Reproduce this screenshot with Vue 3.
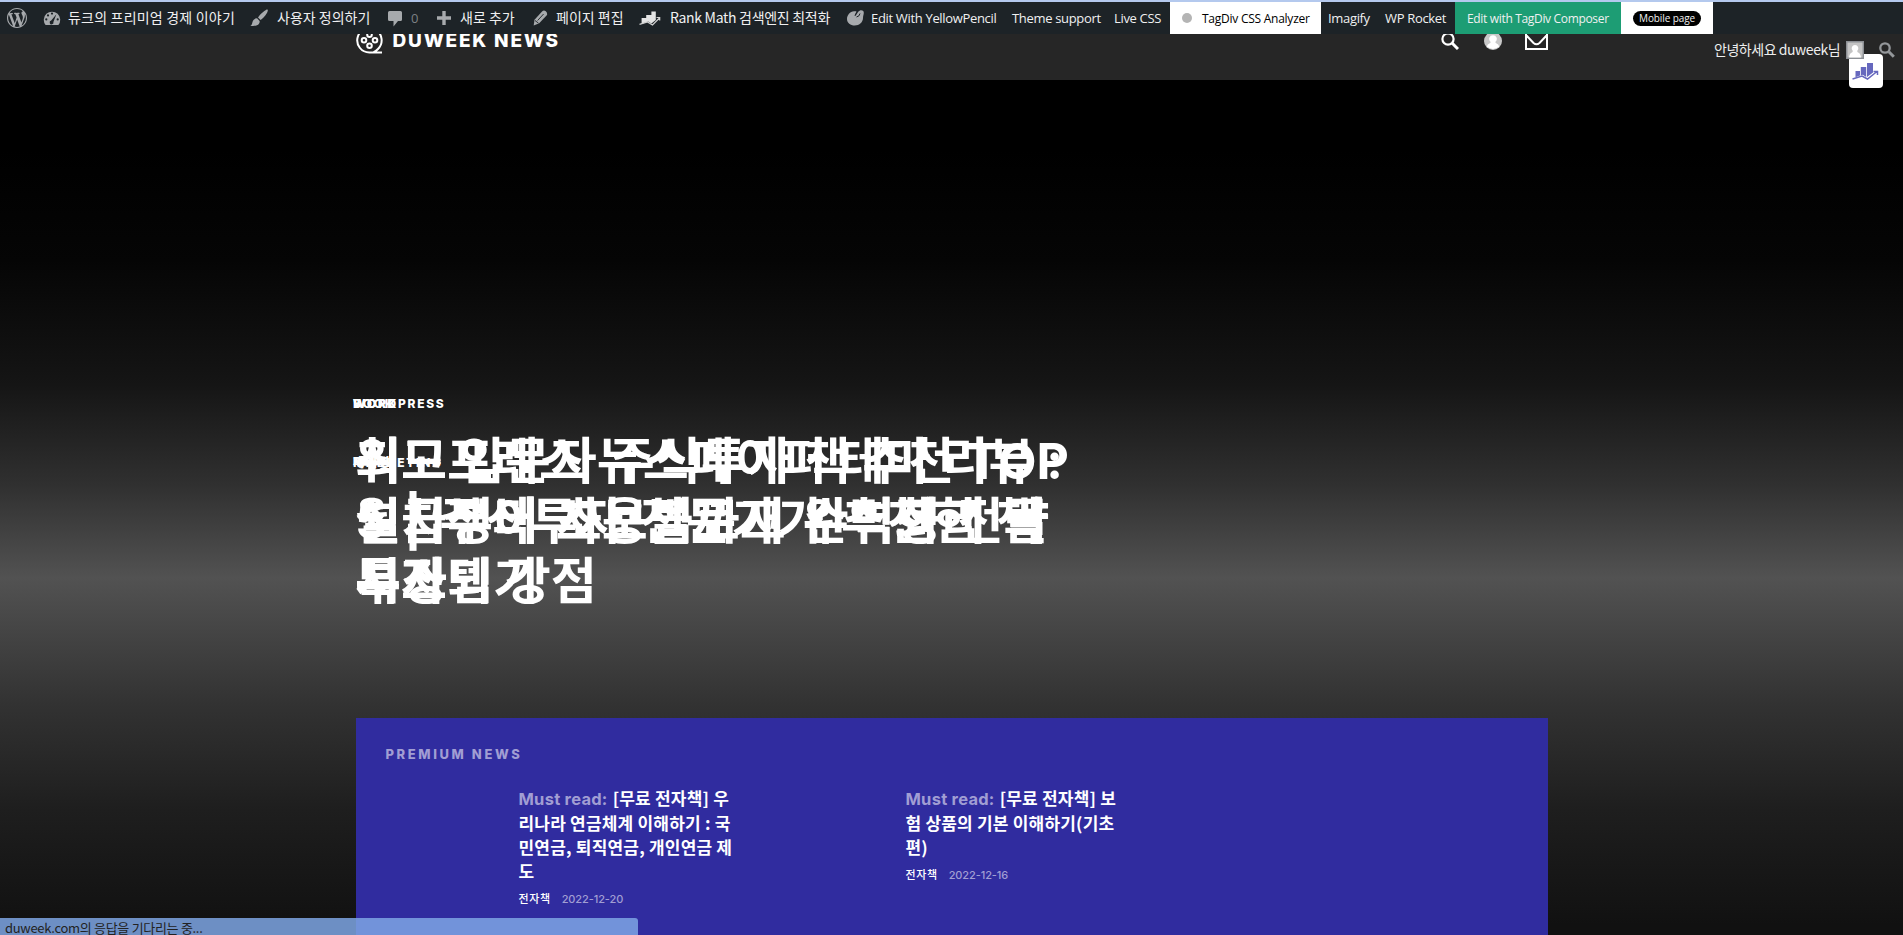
<script setup>
const slides = [
  {tags: ['WORDPRESS', 'MARKETING'], lines: ['워드프레스 뉴스페이퍼 테마 리뷰 :', '설치부터 사용법까지 완벽정리 글', '시스템 강점']},
  {tags: ['BOOK', '재테크'], lines: ['최고 입문자 주식투자 책 추천 TOP', '5 | 주식투자 전문가가 추천한 책', '특징']},
  {tags: ['WORK', '마케팅'], lines: ['', '월급쟁이 초보블로그 수익화 전략', '부자되기']},
]

const posts = [
  {id: 1, lines: ['[무료 전자책] 우', '리나라 연금체계 이해하기 : 국', '민연금, 퇴직연금, 개인연금 제', '도'], date: '2022-12-20'},
  {id: 2, lines: ['[무료 전자책] 보', '험 상품의 기본 이해하기(기초', '편)'], date: '2022-12-16'},
]
</script>

<template>
  <div class="page">
    <div class="adminbar">
      <div class="item wp">
        <svg width="20" height="20" viewBox="0 0 20 20"><path fill="#a7aaad" d="M20 10c0-5.51-4.49-10-10-10C4.48 0 0 4.49 0 10c0 5.52 4.48 10 10 10 5.51 0 10-4.48 10-10zM7.78 15.37L4.37 6.22c.55-.02 1.17-.08 1.17-.08.5-.06.44-1.13-.06-1.11 0 0-1.45.11-2.37.11-.18 0-.37 0-.58-.01C4.12 2.69 6.87 1.11 10 1.11c2.33 0 4.45.87 6.05 2.34-.68-.11-1.65.39-1.65 1.58 0 .74.45 1.36.9 2.1.35.61.55 1.36.55 2.46 0 1.49-1.4 5-1.4 5l-3.03-8.37c.54-.02.82-.17.82-.17.5-.05.44-1.25-.06-1.22 0 0-1.44.12-2.38.12-.87 0-2.33-.12-2.33-.12-.5-.03-.56 1.2-.06 1.22l.92.08 1.26 3.41zM17.41 10c.24-.64.74-1.87.43-4.25.7 1.29 1.05 2.71 1.05 4.25 0 3.29-1.73 6.24-4.4 7.78.97-2.59 1.94-5.2 2.92-7.78zM6.1 18.09C3.12 16.65 1.11 13.53 1.11 10c0-1.3.23-2.48.72-3.59C3.25 10.3 4.67 14.2 6.1 18.09zm4.03-6.63l2.58 6.98c-.86.29-1.76.45-2.71.45-.79 0-1.57-.11-2.29-.33.81-2.38 1.62-4.74 2.42-7.1z"/></svg>
      </div>
      <div class="item site">
        <svg width="18" height="18" viewBox="0 0 18 18"><path fill="#a7aaad" d="M2.6 16A8.2 8.2 0 1 1 15.4 16z"/><g fill="#1d2327"><circle cx="9" cy="4.6" r="1.1"/><circle cx="5" cy="6.4" r="1.1"/><circle cx="3.3" cy="10.4" r="1.1"/><circle cx="14.7" cy="10.4" r="1.1"/><path d="M13.4 5.2l-3 7.7a1.9 1.9 0 1 1-2.2-1.3z"/></g></svg>
        <span class="ko">듀크의 프리미엄 경제 이야기</span>
      </div>
      <div class="item custom">
        <svg width="18" height="18" viewBox="0 0 18 18"><path fill="#a7aaad" d="M17.5.6c.7.7.2 2.1-.9 3.9-1.6 2.500-3.900 5.200-6 6.500L8 8.500C9.400 6.300 12 3.600 14.300 2 15.900.8 17 .2 17.500.6zM7.100 9.300l2.500 2.600c.4 1.800-.6 3.500-2.600 4.300-2 .8-4.500.8-6.700.5 1.700-.8 1.700-1.900 2.200-3.800.6-2.200 2.400-3.700 4.600-3.600z"/></svg>
        <span class="ko">사용자 정의하기</span>
      </div>
      <div class="item comment">
        <svg width="14" height="17" viewBox="0 0 14 17"><path fill="#a7aaad" d="M1.500 1h11Q14 1 14 2.500v7Q14 11 12.500 11H10l-4.500 5.500V11h-4Q0 11 0 9.500v-7Q0 1 1.500 1z"/></svg>
        <span class="count">0</span>
      </div>
      <div class="item add">
        <svg width="14" height="14" viewBox="0 0 14 14"><path fill="#a7aaad" d="M5.300 0h3.400v5.300H14v3.400H8.700V14H5.300V8.700H0V5.300h5.300z"/></svg>
        <span class="ko">새로 추가</span>
      </div>
      <div class="item edit">
        <svg width="15" height="16" viewBox="0 0 15 16"><path fill="#a7aaad" d="M9.300 1.200Q11-.2 12.800 1.300T14 5L6.200 13.200.7 15.400 1.500 9.800z"/><path fill="none" stroke="#1d2327" stroke-width=".9" d="M4.600 10.500l6-6.500M2 10.500l3.500 2.700"/></svg>
        <span class="ko">페이지 편집</span>
      </div>
      <div class="item rank">
        <svg width="22" height="16" viewBox="0 0 22 16"><path fill="#e4e4e4" d="M2.600 8h4.600V5h5.200V1.500h4.400V10l-4.400 3.500-3.200-2-6.600 2.500z"/><path fill="none" stroke="#d0d0d0" stroke-width="1.200" d="M.5 14.300L8.500 12l5 3 7-7M17.500 7.500h3.200v3"/></svg>
        <span class="ko">Rank Math 검색엔진 최적화</span>
      </div>
      <div class="item yellow">
        <svg width="17" height="16" viewBox="0 0 17 16"><path fill="#a7aaad" d="M7 1.300C3 1.800 0 5 0 9s3.500 6.500 7.700 6.500C12.500 15.500 16 12 16 8c0-2.200.8-3.300.8-5.200C16.800.7 14.700 0 13 .5c-2.500.7-2.800 4-4.700 5.500C7 6.700 8 3.700 9.500 1.700 9 1.100 8 1.100 7 1.300z"/><path d="M9.500 7Q12.500 6.500 13 3.500" fill="none" stroke="#1d2327"/></svg>
        <span>Edit With YellowPencil</span>
      </div>
      <div class="item theme"><span>Theme support</span></div>
      <div class="item live"><span>Live CSS</span></div>
      <div class="item analyzer"><i class="dot"></i><span>TagDiv CSS Analyzer</span></div>
      <div class="item imagify"><span>Imagify</span></div>
      <div class="item rocket"><span>WP Rocket</span></div>
      <div class="item composer"><span>Edit with TagDiv Composer</span></div>
      <div class="item mobile"><span class="pill">Mobile page</span></div>
    </div>

    <header class="header">
      <div class="header-inner">
        <div class="logo">
          <svg width="27" height="27" viewBox="0 0 27 27" fill="none" stroke="#fff" stroke-width="2"><path d="M26 25.500H13.500A12.200 12.200 0 1 1 22 22q-2 2.300-4.500 3.200"/><circle cx="13.500" cy="7.700" r="2.300"/><circle cx="13.500" cy="18.700" r="2.300"/><circle cx="8" cy="13.200" r="2.300"/><circle cx="19" cy="13.200" r="2.300"/></svg>
          <span>DUWEEK NEWS</span>
        </div>
        <div class="tools">
          <svg class="search" width="18" height="18" viewBox="0 0 18 18" fill="none" stroke="#fff"><circle cx="7" cy="7" r="5.600" stroke-width="2.200"/><path stroke-width="3" d="M11 11l6 6"/></svg>
          <svg class="user" width="18" height="18" viewBox="0 0 18 18"><circle cx="9" cy="9" r="9" fill="#c8c8c8"/><path fill="#fff" d="M9 3.200a3.700 3.700 0 0 1 2.500 6.500q-.4 1 .7 1.500 2.400.8 3 3.400A9 9 0 0 1 2.800 14.600q.6-2.600 3-3.400 1.100-.5.7-1.500A3.700 3.700 0 0 1 9 3.200z"/></svg>
          <svg class="mail" width="23" height="19" viewBox="0 0 23 19" fill="none" stroke="#fff" stroke-width="2"><path d="M1 1h21v17H1zM1 4l7.500 8q3 2.500 6 0L22 4"/></svg>
        </div>
      </div>
    </header>

    <div class="rank-badge">
      <svg width="27" height="19" viewBox="0 0 27 19"><path fill="#6668be" d="M3.500 9H8v4.500l-4.500 1.700zM8.800 5h5.400v10l-3.400-2.300-2 .7zM15 1h6v9.500L15 15z"/><path fill="none" stroke="#6668be" stroke-width="1.500" d="M.5 17l9.500-3 5.500 3L25 9.500M21.500 9.500h4v3.500"/></svg>
    </div>
    <div class="account">
      <span class="ko">안녕하세요 duweek님</span>
      <svg class="avatar" width="18" height="18" viewBox="0 0 18 18"><path fill="#c4c4c4" stroke="#8c8f94" stroke-width="1.500" d="M.7.7h16.600v16.600H.7z"/><path fill="#fff" d="M9 4a3.300 3.300 0 0 1 2.300 5.700q-.3 1.200.7 1.700 2.600.8 3 5.100H3q.4-4.300 3-5.100 1-.5.7-1.700A3.300 3.300 0 0 1 9 4z"/></svg>
      <svg class="find" width="16" height="16" viewBox="0 0 16 16" fill="none" stroke="#94979a"><circle cx="6" cy="6" r="4.700" stroke-width="2.300"/><path stroke-width="3" d="M9.800 9.800l5 5"/></svg>
    </div>

    <section class="hero">
      <div class="slides">
        <div v-for="slide in slides" :key="slide.tags[0]" class="slide">
          <div class="tag">{{ slide.tags[0] }}</div>
          <div class="tag tag-low">{{ slide.tags[1] }}</div>
          <h1>
            <span v-for="(line, i) in slide.lines" :key="i">{{ line }}</span>
          </h1>
        </div>
      </div>
    </section>

    <section class="premium">
      <h2>PREMIUM NEWS</h2>
      <div class="posts">
        <article v-for="post in posts" :key="post.id">
          <h3>
            <span v-for="(line, i) in post.lines" :key="i" class="line"><em v-if="i === 0">Must read:</em>{{ line }}</span>
          </h3>
          <div class="meta"><b>전자책</b><time>{{ post.date }}</time></div>
        </article>
      </div>
    </section>

    <div class="status">duweek.com의 응답을 기다리는 중...</div>
  </div>
</template>

<style>
body {
  margin: 0;
  background: #000;
}
</style>

<style scoped>
.page {
  position: relative;
  width: 1903px;
  height: 935px;
  overflow: hidden;
  display: flex;
  flex-direction: column;
  color: #fff;
  background: linear-gradient(#000 150px, #050505 260px, #151515 385px, #303030 485px, #525252 578px, #323232 705px, #1e1e1e 810px, #111 925px);
  font-family: "Open Sans", "Noto Sans CJK KR", sans-serif;
}
.adminbar {
  box-sizing: border-box;
  flex: none;
  height: 34px;
  border-top: 2px solid #b4c9ee;
  background: #1d2327;
  display: flex;
  font-size: 13px;
  letter-spacing: -0.33px;
  color: #f0f0f1;
}
.item {
  box-sizing: border-box;
  flex: none;
  display: flex;
  align-items: center;
  white-space: nowrap;
}
.ko {
  font-family: "Noto Sans CJK KR", sans-serif;
  font-size: 14px;
  letter-spacing: 0;
}
.item .ko {
  margin-top: -2px;
}
.wp { width: 43px; padding-left: 7px; }
.site { width: 207px; gap: 7px; }
.site .ko { letter-spacing: 0.2px; }
.custom { width: 138px; gap: 9px; }
.comment { width: 49px; gap: 9px; }
.add { width: 96px; gap: 9px; }
.edit { width: 106px; gap: 8px; }
.rank { width: 208px; gap: 9px; }
.rank .ko { letter-spacing: -0.3px; }
.yellow { width: 165px; gap: 7px; }
.theme { width: 102px; }
.live { width: 56px; }
.count { color: #7c8084; }
.analyzer {
  width: 151px;
  padding-left: 12px;
  gap: 10px;
  background: #fff;
  color: #000;
  font-size: 12px;
  letter-spacing: -0.25px;
}
.dot {
  width: 10px;
  height: 10px;
  border-radius: 50%;
  background: #b4b4b4;
}
.imagify { width: 64px; padding-left: 7px; }
.rocket { width: 70px; }
.composer {
  width: 166px;
  padding-left: 12px;
  background: #1d9d74;
  font-size: 12px;
}
.mobile {
  width: 92px;
  padding-left: 12px;
  background: #fff;
}
.pill {
  width: 68px;
  line-height: 15px;
  border-radius: 8px;
  background: #000;
  text-align: center;
  font-size: 10px;
  letter-spacing: -0.1px;
}
.header {
  flex: none;
  height: 46px;
  overflow: hidden;
  background: #262626;
}
.header-inner {
  width: 1192px;
  margin: -7px auto 0;
  display: flex;
  justify-content: space-between;
}
.logo {
  display: flex;
  align-items: center;
  gap: 10px;
  font: 800 19px/27px Inter, sans-serif;
  letter-spacing: 1.8px;
}
.tools {
  display: flex;
  padding-top: 4px;
}
.search { margin: 1px 25px 0 0; }
.user { margin: 1px 23px 0 0; }
.account {
  position: absolute;
  left: 1714px;
  top: 39px;
  display: flex;
  align-items: center;
  line-height: 20px;
  color: #eee;
  white-space: nowrap;
}
.account .ko {
  width: 132px;
  letter-spacing: -0.45px;
}
.avatar { margin: 2px 15px 0 0; }
.find { margin-top: 2px; }
.rank-badge {
  box-sizing: border-box;
  position: absolute;
  left: 1849px;
  top: 54px;
  width: 34px;
  height: 34px;
  padding-right: 2px;
  border-radius: 4px;
  background: #fff;
  display: flex;
  align-items: center;
  justify-content: center;
}
.hero {
  flex: none;
  box-sizing: border-box;
  height: 638px;
  padding: 316px 0 0 353px;
}
.slides {
  display: grid;
}
.slide {
  grid-area: 1 / 1;
}
.tag {
  height: 16px;
  font: 800 12px/16px Inter, "Noto Sans CJK KR", sans-serif;
  letter-spacing: 1.7px;
}
.tag-low {
  margin-top: 43px;
}
h1 {
  margin: -40px 0 0 2px;
  font: 700 50px/60px Inter, "Noto Sans CJK KR", sans-serif;
}
h1 span {
  display: block;
  height: 60px;
  white-space: nowrap;
}
h1 span:nth-child(2) {
  word-spacing: 5px;
}
.premium {
  flex: none;
  box-sizing: border-box;
  width: 1192px;
  height: 217px;
  margin: 0 auto;
  padding: 26px 0 0 30px;
  background: #302c9f;
}
h2 {
  margin: 0;
  font: 800 13px/20px Inter, sans-serif;
  letter-spacing: 2.6px;
  color: #a19ed3;
}
.posts {
  display: flex;
  gap: 170px;
  padding: 22px 0 0 133px;
}
article {
  width: 217px;
}
h3 {
  margin: 0;
  font: 700 17px/24px "Noto Sans CJK KR", sans-serif;
  letter-spacing: 0.2px;
}
.line {
  display: block;
  white-space: nowrap;
}
em {
  margin-right: 5px;
  font: 700 16.5px/24px Inter, sans-serif;
  letter-spacing: 0.25px;
  color: #a19ed3;
}
.meta {
  display: flex;
  gap: 11px;
  padding-top: 6px;
  font: 500 11px/20px Inter, "Noto Sans CJK KR", sans-serif;
}
.meta b {
  font-weight: 500;
  letter-spacing: 0.6px;
}
.meta time {
  color: #a19ed3;
  letter-spacing: -0.1px;
}
.status {
  position: absolute;
  left: 0;
  bottom: 0;
  box-sizing: border-box;
  width: 638px;
  height: 17px;
  padding-left: 5px;
  border-radius: 0 3px 0 0;
  background: rgba(126, 166, 228, 0.85);
  color: #222;
  font: 13px/19px "Noto Sans CJK KR", sans-serif;
  letter-spacing: -0.3px;
}
</style>
